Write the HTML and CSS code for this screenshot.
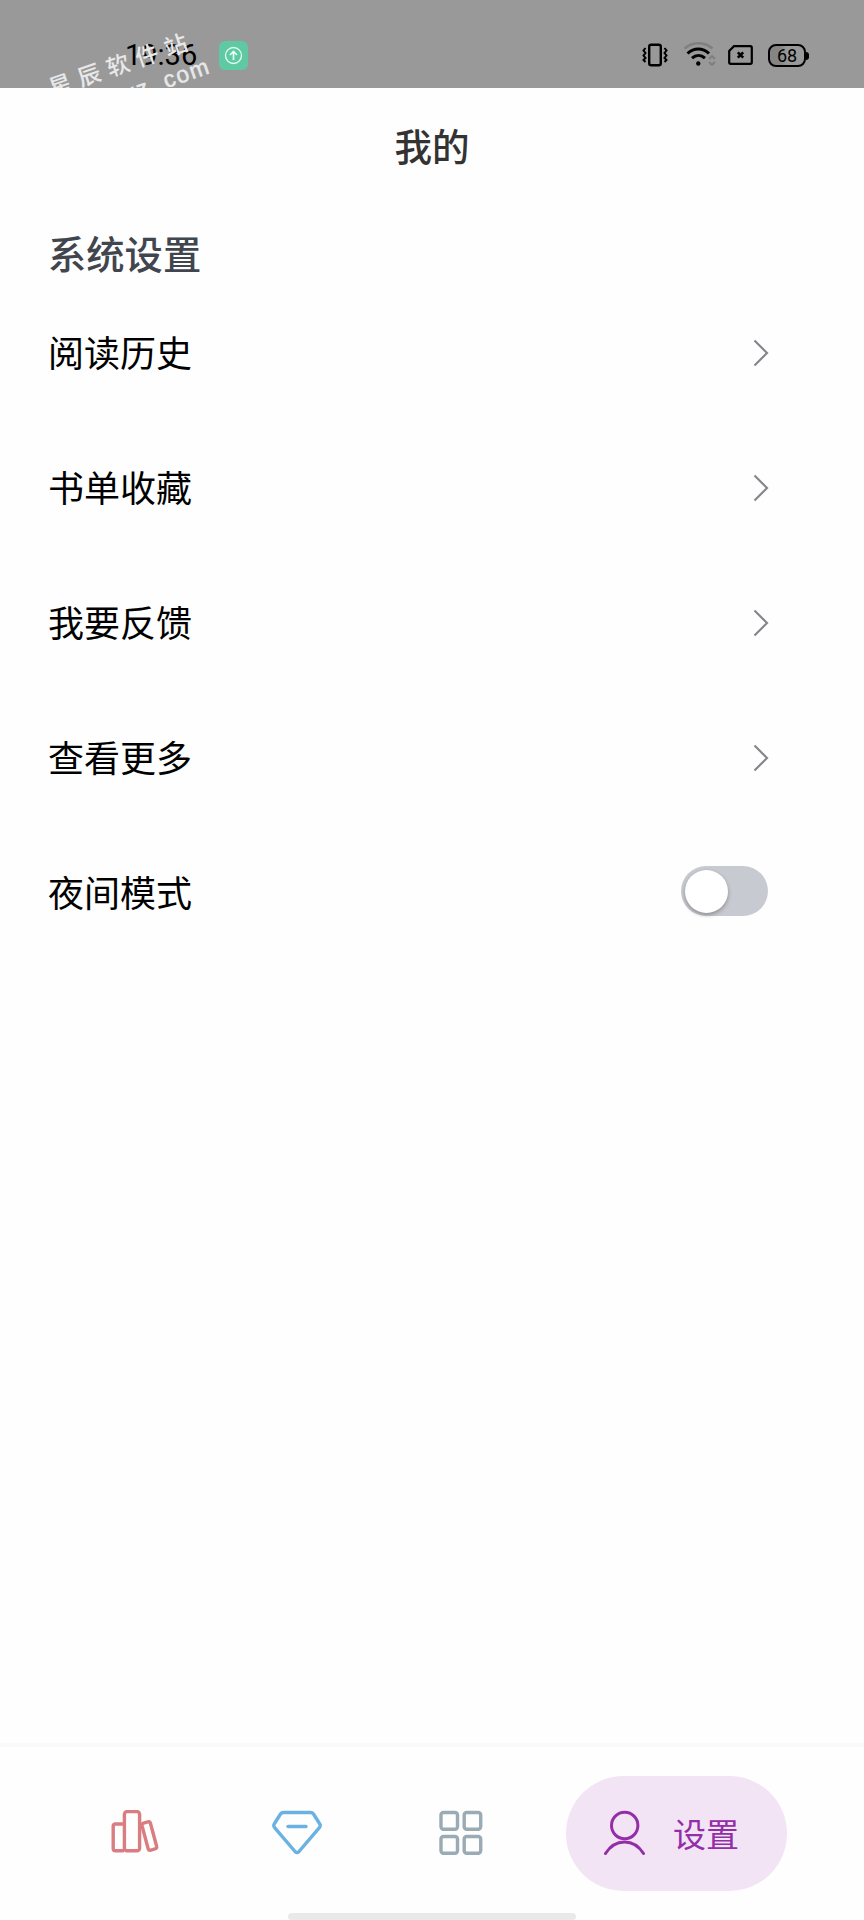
FILE: index.html
```
<!DOCTYPE html>
<html lang="zh-CN">
<head>
    <title>我的</title>
    <meta charset="utf-8">
    <meta name="viewport" content="width=device-width, initial-scale=1">
    <link rel="stylesheet" href="styles.css">
</head>
<body>
    <div class="status-bar">
        <div class="status-left">
            <span class="time">19:36</span>
            <svg class="app-badge" width="29" height="29" viewBox="0 0 29 29">
                <rect width="29" height="29" rx="6" fill="#5fc9a3"/>
                <circle cx="14.5" cy="14.5" r="8" fill="none" stroke="#e4fff4" stroke-width="1.3"/>
                <path d="M14.5 19v-8.5M11 14l3.500-3.500L18 14" fill="none" stroke="#e4fff4" stroke-width="1.7"/>
            </svg>
        </div>
        <div class="status-right">
            <svg width="26" height="24" viewBox="0 0 26 24" fill="none" stroke="#000">
                <rect x="7.200" y="1.700" width="11.600" height="20.600" rx="2" stroke-width="2.400"/>
                <path d="M3.500 5l-2 2.500 2 2.500-2 2.500 2 2.500-2 2 2 2M22.500 5l2 2.500-2 2.500 2 2.500-2 2.500 2 2-2 2" stroke-width="2"/>
            </svg>
            <svg class="wifi" width="33" height="26" viewBox="0 0 33 26" fill="none" stroke="#000" stroke-width="3">
                <path d="M1.500 6.500C10-.5 21-.5 29.500 6.500" stroke="#808080" stroke-width="2.600"/>
                <path d="M4.500 11.500C11 5.600 19.500 5.600 26 11.500"/>
                <path d="M9 16.200C13 12.500 18 12.500 22 16.200"/>
                <circle cx="15.300" cy="21.500" r="2.200" fill="#000" stroke="none"/>
                <path d="M26 17l3-3 3 3M26 20l3 3 3-3" stroke="#7d7d7d" stroke-width="1.800"/>
            </svg>
            <svg width="25" height="20" viewBox="0 0 25 20" fill="none" stroke="#000" stroke-width="2.200">
                <path d="M6 1.200H22.300Q23.800 1.200 23.800 2.700V17.300Q23.800 18.800 22.300 18.800H2.700Q1.200 18.800 1.200 17.300V6z"/>
                <path d="M9.800 7.300l5.400 5.400M15.200 7.300l-5.400 5.400" stroke-width="2.600"/>
            </svg>
            <div class="battery">68</div>
        </div>
        <div class="watermark">
            <div class="mark-name">星辰软件站</div>
            <div class="mark-site">xz. com</div>
        </div>
    </div>

    <h1 class="title">我的</h1>

    <div class="settings">
        <h2>系统设置</h2>
        <div class="row">
            <span>阅读历史</span>
            <svg class="arrow" viewBox="0 0 16 28"><path d="M1.500 1.500L14 14 1.500 26.500"/></svg>
        </div>
        <div class="row">
            <span>书单收藏</span>
            <svg class="arrow" viewBox="0 0 16 28"><path d="M1.500 1.500L14 14 1.500 26.500"/></svg>
        </div>
        <div class="row">
            <span>我要反馈</span>
            <svg class="arrow" viewBox="0 0 16 28"><path d="M1.500 1.500L14 14 1.500 26.500"/></svg>
        </div>
        <div class="row">
            <span>查看更多</span>
            <svg class="arrow" viewBox="0 0 16 28"><path d="M1.500 1.500L14 14 1.500 26.500"/></svg>
        </div>
        <div class="row">
            <span>夜间模式</span>
            <div class="switch"><div class="knob"></div></div>
        </div>
    </div>

    <div class="tabbar">
        <div class="tabs">
            <div class="tab books">
                <svg width="50" height="46" viewBox="0 0 50 46">
                    <path d="M13 14H5.500Q3.200 14 3.200 16.300V38.500Q3.200 40.800 5.500 40.800H13"/>
                    <rect x="14.400" y="1.600" width="15.200" height="39.200" rx="2.600"/>
                    <rect x="-4.400" y="-14" width="8.800" height="28" rx="2.200" transform="translate(39.300 26) rotate(-15)"/>
                </svg>
            </div>
            <div class="tab diamond">
                <svg width="50" height="46" viewBox="0 0 50 46">
                    <path d="M11.500 2.500H38.500Q40.500 2.500 41.500 4L47.500 13.500Q49 15.700 47.400 17.600L27 41.500Q25 43.700 23 41.500L2.600 17.600Q1 15.700 2.500 13.500L8.500 4Q9.500 2.500 11.500 2.500z"/>
                    <path d="M16 16.500H34"/>
                </svg>
            </div>
            <div class="tab grid">
                <svg width="44" height="46" viewBox="0 0 44 46">
                    <rect x="2" y="2.500" width="16.500" height="16.800" rx="2.500"/>
                    <rect x="25.200" y="2.500" width="16.500" height="16.800" rx="2.500"/>
                    <rect x="2" y="26.500" width="16.500" height="16.800" rx="2.500"/>
                    <rect x="25.200" y="26.500" width="16.500" height="16.800" rx="2.500"/>
                </svg>
            </div>
            <div class="tab active">
                <svg width="42" height="46" viewBox="0 0 42 46">
                    <circle cx="20.700" cy="15.500" r="13.200"/>
                    <path d="M1.500 43.500C11 28 30 28 39.500 43.500"/>
                </svg>
                <span>设置</span>
            </div>
        </div>
        <div class="home-line"></div>
    </div>
</body>
</html>
```

FILE: styles.css
```
* { margin: 0; padding: 0; box-sizing: border-box; }
body { display: flex; flex-direction: column; height: 1920px; overflow: hidden; background: #fefefe; font-family: "Noto Sans CJK SC", sans-serif; color: #000; }
svg { display: block; }

.status-bar { position: relative; flex: none; display: flex; justify-content: space-between; height: 88px; padding: 22px 55px 0 125px; overflow: hidden; background: #999; }
.status-left, .status-right { display: flex; align-items: center; height: 66px; }
.status-left { gap: 22px; }
.status-right { gap: 15px; }
.wifi { margin-right: -3px; }
.time { width: 72px; font: 29px/66px Roboto, sans-serif; }
.battery { position: relative; width: 38px; height: 23px; border: 2px solid #000; border-radius: 8px; background: linear-gradient(90deg, #858585 30%, #999 50%); font: 18px/19px Roboto, sans-serif; text-align: center; margin-right: 3px; }
.battery::after { content: ""; position: absolute; right: -5px; top: 6px; width: 3px; height: 8px; border-radius: 0 3px 3px 0; background: #000; }

/* slanted site mark, cut off by the bottom of the bar */
.watermark { position: absolute; left: 45px; top: 76px; transform: rotate(-19deg); transform-origin: 0 0; color: #e8e8e8; white-space: nowrap; }
.mark-name { font-size: 23px; line-height: 24px; letter-spacing: 7.5px; font-weight: 500; }
.mark-site { margin: 7px 0 0 69px; font: 23px/24px "Liberation Sans", sans-serif; letter-spacing: 1.5px; -webkit-text-stroke: 0.5px #e8e8e8; }

.title { flex: none; height: 118px; font-size: 37.5px; line-height: 114px; font-weight: 500; text-align: center; color: #333; }

.settings { flex: 1; padding: 14px 95px 0 48px; }
.settings h2 { height: 65px; font-size: 38.3px; line-height: 66px; font-weight: 500; color: #41454e; }
.row { display: flex; align-items: center; justify-content: space-between; height: 135px; font-size: 36px; }
.row span { padding-bottom: 3px; }
.arrow { width: 16px; height: 28px; fill: none; stroke: #85868b; stroke-width: 2.2; }
.switch { width: 87px; height: 50px; margin: 0 1px 4px 0; padding: 4px; border-radius: 25px; background: #c7cad0; }
.knob { width: 43px; height: 43px; border-radius: 50%; background: #fff; box-shadow: 0 2px 4px rgba(0,0,0,0.3); }

.tabbar { flex: none; display: flex; flex-direction: column; align-items: center; justify-content: space-between; height: 177px; border-top: 4px solid #f9f9f9; background: #fefefe; }
.tabs { display: flex; align-items: center; width: 100%; height: 115px; margin-top: 29px; padding-left: 110px; }
.tab svg { margin-bottom: 2px; fill: none; stroke-width: 3.4; stroke-linecap: round; stroke-linejoin: round; }
.books { width: 162px; }
.books svg { stroke: #d97d81; }
.diamond { width: 167px; }
.diamond svg { stroke: #6ab2e2; }
.grid { width: 127px; }
.grid svg { stroke: #9aabb5; }
.active { display: flex; align-items: center; gap: 27px; width: 221px; height: 115px; padding-left: 38px; border-radius: 58px; background: #f2e4f5; color: #942da8; font-size: 33px; }
.active span { padding-bottom: 2px; }
.active svg { stroke: #942da8; stroke-width: 3; }
.home-line { width: 288px; height: 7px; border-radius: 4px; background: #e9e9e9; }
```
